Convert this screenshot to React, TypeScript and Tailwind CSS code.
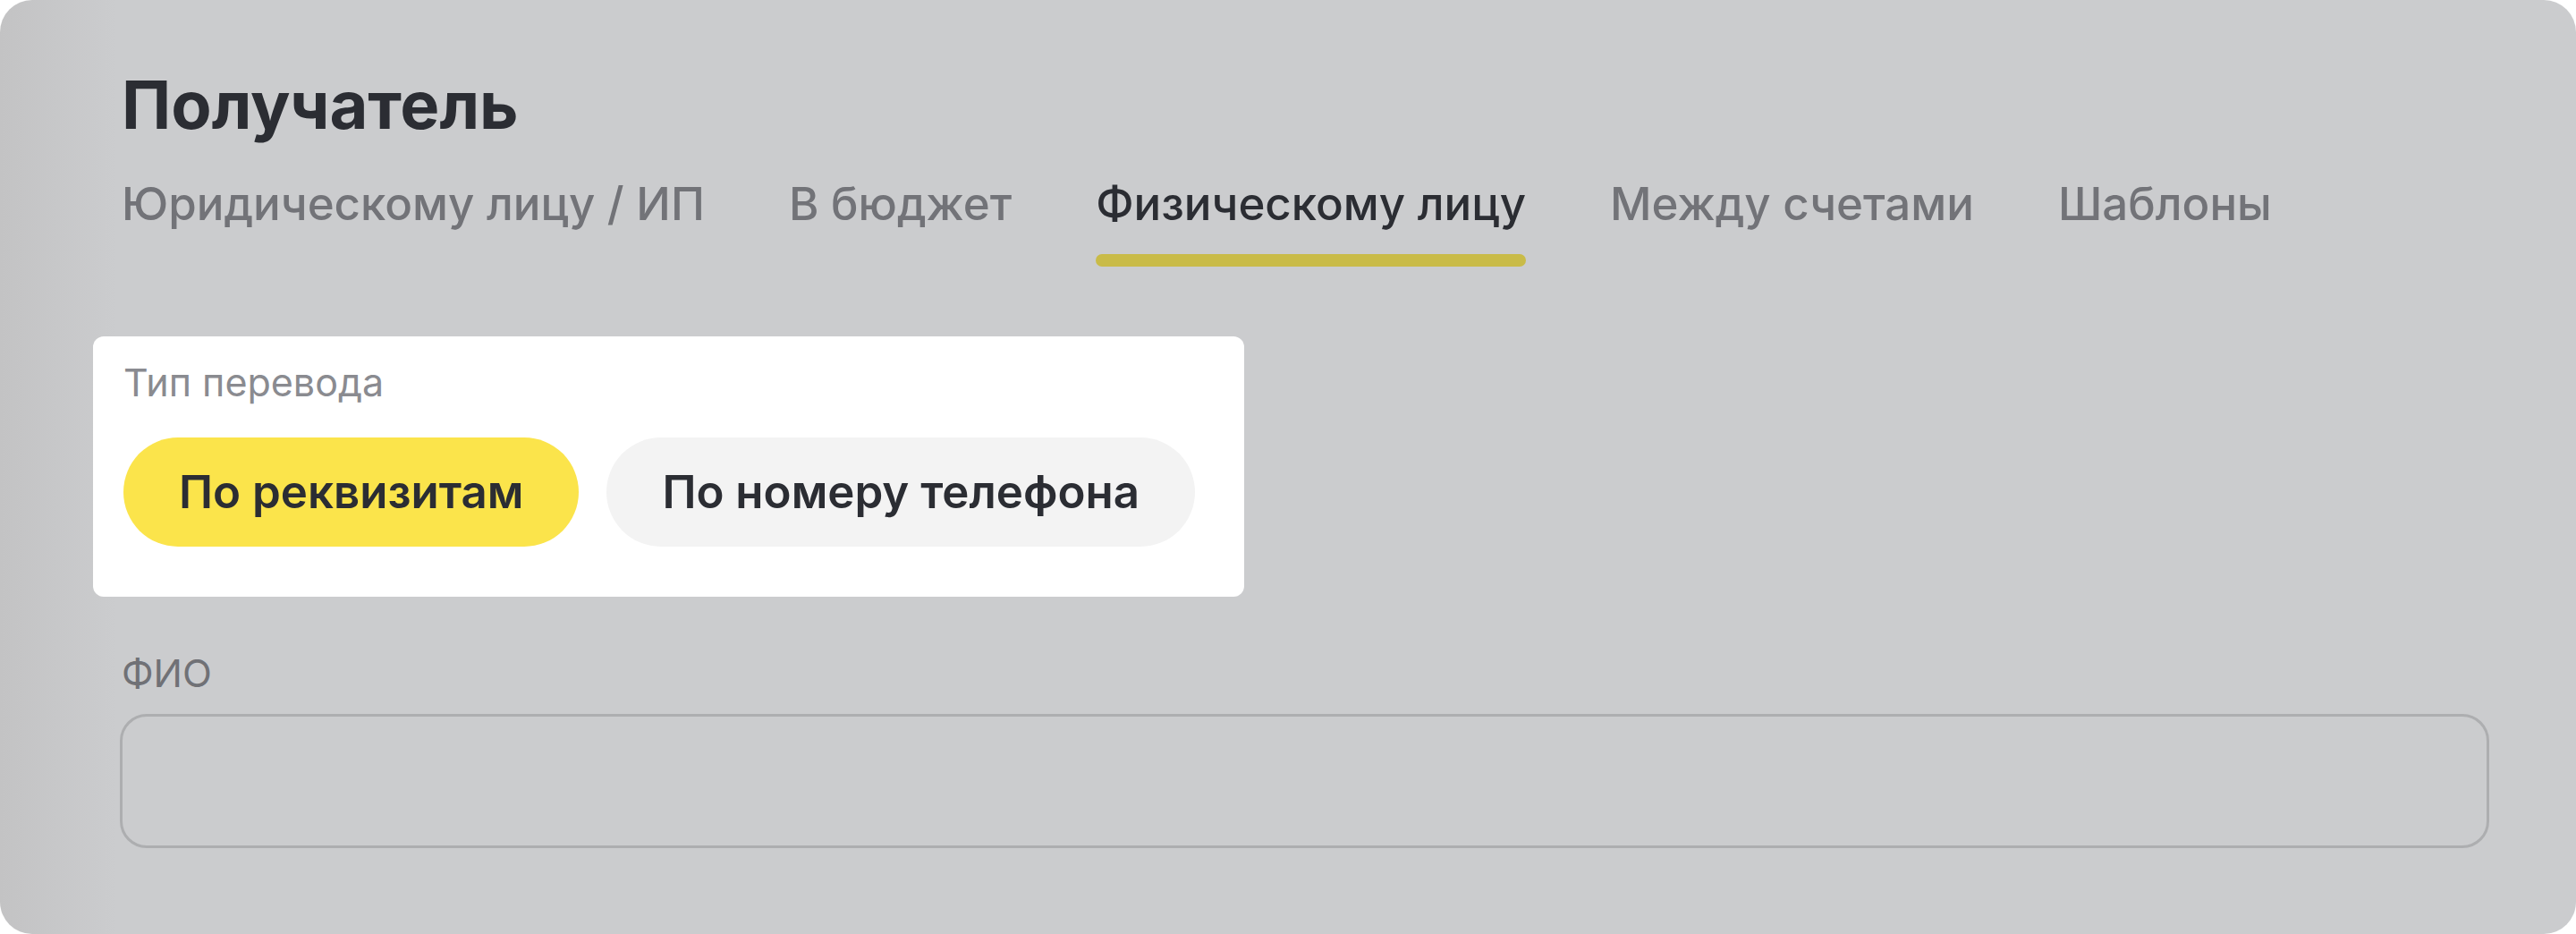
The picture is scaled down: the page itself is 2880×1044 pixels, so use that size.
import { useState } from "react";

const tabs = [
    "Юридическому лицу / ИП",
    "В бюджет",
    "Физическому лицу",
    "Между счетами",
    "Шаблоны",
];

export default function App() {
    const [activeTab, setActiveTab] = useState(2);
    const [transferType, setTransferType] = useState(0);

    return (
        <div
            className="w-[2880px] h-[1044px] bg-white"
            style={{ fontFamily: "Inter, 'Noto Sans', sans-serif" }}
        >
            <section className="h-full rounded-[36px] bg-[#cbccce] bg-[linear-gradient(to_right,#c3c3c4,#cbccce_130px)] pl-[136px] pr-[97px] pt-[72px] flex flex-col">
                <h1 className="text-[74px] leading-[90px] font-bold text-[#2b2d33]">
                    Получатель
                </h1>

                <nav className="mt-[34px] flex gap-[94px]">
                    {tabs.map((tab, i) => (
                        <button
                            key={tab}
                            onClick={() => setActiveTab(i)}
                            className="flex flex-col items-stretch"
                        >
                            <span
                                className={
                                    "text-[51px] leading-[64px] font-medium whitespace-nowrap " +
                                    (i === activeTab
                                        ? "text-[#2b2d33]"
                                        : "text-[#727378]")
                                }
                            >
                                {tab}
                            </span>
                            <span
                                className={
                                    "mt-[24px] h-[14px] rounded-full " +
                                    (i === activeTab
                                        ? "bg-[#c9bb48]"
                                        : "bg-transparent")
                                }
                            />
                        </button>
                    ))}
                </nav>

                {/* highlighted block */}
                <div className="mt-[78px] -ml-[32px] w-[1287px] rounded-[12px] bg-white pl-[34px] pt-[23px] pb-[56px]">
                    <div className="text-[43px] leading-[56px] text-[#8a8b90]">
                        Тип перевода
                    </div>
                    <div className="mt-[34px] flex gap-[31px]">
                        {["По реквизитам", "По номеру телефона"].map(
                            (label, i) => (
                                <button
                                    key={label}
                                    onClick={() => setTransferType(i)}
                                    className={
                                        "h-[122px] px-[62px] rounded-full text-[51px] font-semibold text-[#2b2d33] whitespace-nowrap " +
                                        (i === transferType
                                            ? "bg-[#fbe44b]"
                                            : "bg-[#f3f3f3]")
                                    }
                                >
                                    {label}
                                </button>
                            )
                        )}
                    </div>
                </div>

                <label className="mt-[57px] text-[43px] leading-[56px] text-[#707176]">
                    ФИО
                </label>
                <div className="mt-[18px] -ml-[2px] h-[150px] rounded-[30px] border-[3px] border-[#adaeb0]" />
            </section>
        </div>
    );
}
